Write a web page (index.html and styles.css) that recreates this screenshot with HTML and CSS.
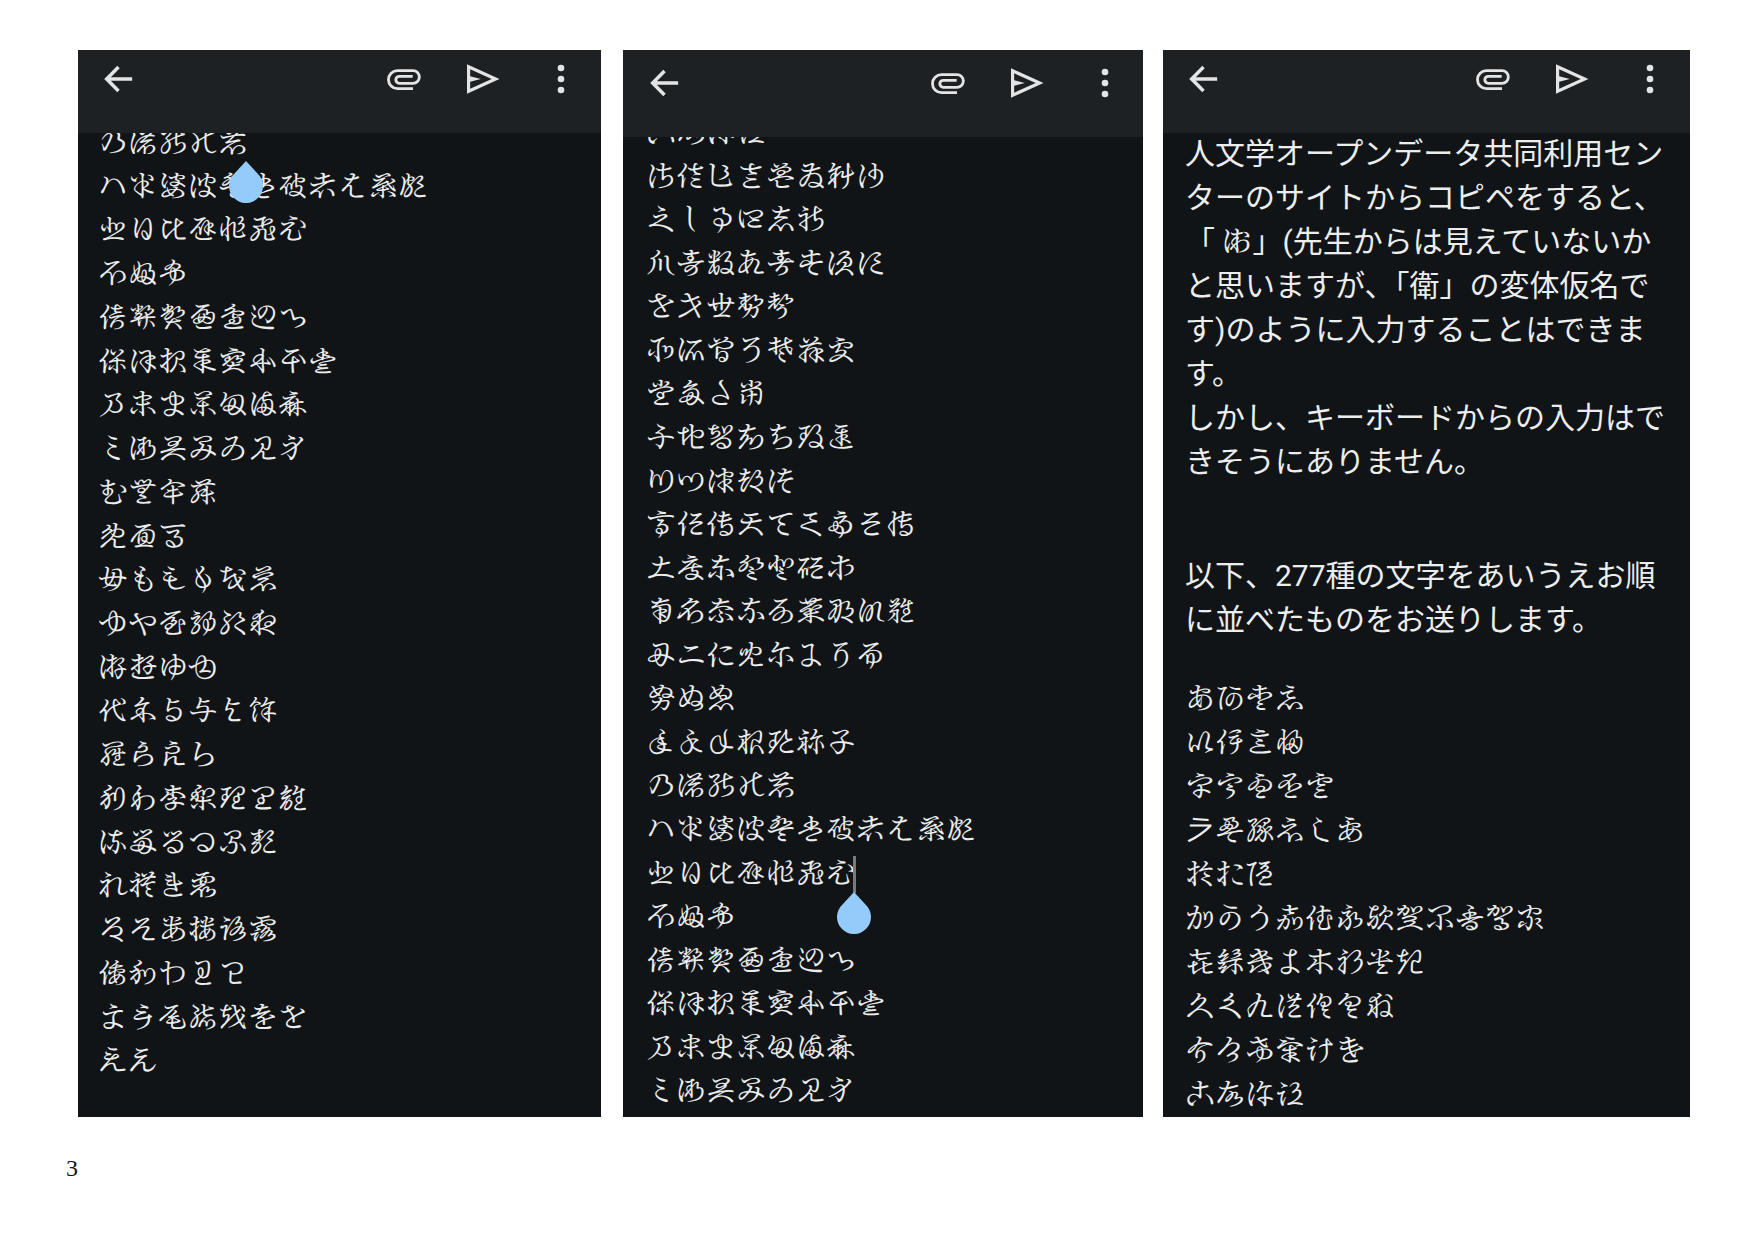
FILE: index.html
```html
<!DOCTYPE html>
<html lang="ja">
<head>
<meta charset="utf-8">
<title>変体仮名の入力</title>
<link rel="stylesheet" href="styles.css">
</head>
<body>
<svg class="sprite" aria-hidden="true">
  <symbol id="back" viewBox="0 0 24 24"><path d="M20.500 12H5.500M12.300 4.800 5.200 12l7.100 7.200" fill="none" stroke="currentColor" stroke-width="2.100"/></symbol>
  <symbol id="clip" viewBox="0 0 24 24"><path d="M18 17.800H8.700a5.400 5.400 0 0 1 0-10.800h9.300a3.800 3.800 0 0 1 0 7.600H9.800a2.100 2.100 0 0 1 0-4.200h8" fill="none" stroke="currentColor" stroke-width="1.700"/></symbol>
  <symbol id="send" viewBox="0 0 24 24"><path d="M3 3.200v17.600L22.500 12zM4.900 6.200 17.800 12 4.900 17.800v-4.100l6.400-1.700-6.400-1.700z" fill="currentColor" fill-rule="evenodd"/></symbol>
  <symbol id="more" viewBox="0 0 24 24"><g fill="currentColor"><circle cx="12" cy="5.400" r="2"/><circle cx="12" cy="12" r="2"/><circle cx="12" cy="18.600" r="2"/></g></symbol>
  <symbol id="drop" viewBox="0 0 34 42"><path d="M17 0 28.500 12.500a17 17 0 1 1-23 0z" fill="#95cbfa"/></symbol>
</svg>
<main class="panels">
  <section class="panel">
    <header class="bar">
      <button class="icon back" aria-label="戻る"><svg><use href="#back"/></svg></button>
      <button class="icon" aria-label="添付"><svg><use href="#clip"/></svg></button>
      <button class="icon" aria-label="送信"><svg><use href="#send"/></svg></button>
      <button class="icon" aria-label="その他"><svg><use href="#more"/></svg></button>
    </header>
    <div class="body">
      <ul class="kana kana-end">
        <li>&#x1B099;&#x1B09A;&#x1B09B;&#x1B09C;&#x1B09D;<span class="cursor"><svg class="drop"><use href="#drop"/></svg></span></li>
        <li>&#x1B09E;&#x1B09F;&#x1B0A0;&#x1B0A1;&#x1B0A2;&#x1B0A3;&#x1B0A4;&#x1B0A5;&#x1B0A6;&#x1B0A7;&#x1B0A8;</li>
        <li>&#x1B0A9;&#x1B0AA;&#x1B0AB;&#x1B0AC;&#x1B0AD;&#x1B0AE;&#x1B0AF;</li>
        <li>&#x1B0B0;&#x1B0B1;&#x1B0B2;</li>
        <li>&#x1B0B3;&#x1B0B4;&#x1B0B5;&#x1B0B6;&#x1B0B7;&#x1B0B8;&#x1B0B9;</li>
        <li>&#x1B0BA;&#x1B0BB;&#x1B0BC;&#x1B0BD;&#x1B0BE;&#x1B0BF;&#x1B0C0;&#x1B0C1;</li>
        <li>&#x1B0C2;&#x1B0C3;&#x1B0C4;&#x1B0C7;&#x1B0C6;&#x1B0C5;&#x1B0C8;</li>
        <li>&#x1B0C9;&#x1B0CA;&#x1B0CB;&#x1B0CC;&#x1B0CD;&#x1B0CE;&#x1B0CF;</li>
        <li>&#x1B0D0;&#x1B0D1;&#x1B0D2;&#x1B0D3;</li>
        <li>&#x1B0D4;&#x1B0D5;&#x1B0D6;</li>
        <li>&#x1B0D7;&#x1B0D8;&#x1B0D9;&#x1B0DA;&#x1B0DB;&#x1B0DC;</li>
        <li>&#x1B0DD;&#x1B0DE;&#x1B0DF;&#x1B0E0;&#x1B0E1;&#x1B0E2;</li>
        <li>&#x1B0E3;&#x1B0E6;&#x1B0E4;&#x1B0E5;</li>
        <li>&#x1B0E7;&#x1B0E8;&#x1B0EA;&#x1B0E9;&#x1B0EB;&#x1B0EC;</li>
        <li>&#x1B0ED;&#x1B0EF;&#x1B0EE;&#x1B0F0;</li>
        <li>&#x1B0F1;&#x1B0F2;&#x1B0F3;&#x1B0F4;&#x1B0F5;&#x1B0F6;&#x1B0F7;</li>
        <li>&#x1B0F8;&#x1B0F9;&#x1B0FA;&#x1B0FB;&#x1B0FC;&#x1B0FD;</li>
        <li>&#x1B0FF;&#x1B0FE;&#x1B100;&#x1B101;</li>
        <li>&#x1B102;&#x1B103;&#x1B104;&#x1B105;&#x1B106;&#x1B107;</li>
        <li>&#x1B108;&#x1B109;&#x1B10A;&#x1B10B;&#x1B10C;</li>
        <li>&#x1B116;&#x1B117;&#x1B118;&#x1B119;&#x1B11A;&#x1B11B;&#x1B11C;</li>
        <li>&#x1B11D;&#x1B11E;</li>
      </ul>
    </div>
  </section>
  <section class="panel panel-mid">
    <header class="bar">
      <button class="icon back" aria-label="戻る"><svg><use href="#back"/></svg></button>
      <button class="icon" aria-label="添付"><svg><use href="#clip"/></svg></button>
      <button class="icon" aria-label="送信"><svg><use href="#send"/></svg></button>
      <button class="icon" aria-label="その他"><svg><use href="#more"/></svg></button>
    </header>
    <div class="body">
      <ul class="kana">
        <li>&#x1B038;&#x1B039;&#x1B03A;&#x1B03B;</li>
        <li>&#x1B03E;&#x1B03D;&#x1B03C;&#x1B03F;&#x1B040;&#x1B041;&#x1B042;&#x1B043;</li>
        <li>&#x1B044;&#x1B045;&#x1B046;&#x1B047;&#x1B048;&#x1B049;</li>
        <li>&#x1B04A;&#x1B04B;&#x1B04C;&#x1B04D;&#x1B04E;&#x1B04F;&#x1B050;&#x1B051;</li>
        <li>&#x1B052;&#x1B053;&#x1B054;&#x1B055;&#x1B056;</li>
        <li>&#x1B057;&#x1B058;&#x1B059;&#x1B05A;&#x1B05B;&#x1B05C;&#x1B05D;</li>
        <li>&#x1B05E;&#x1B05F;&#x1B060;&#x1B061;</li>
        <li>&#x1B062;&#x1B063;&#x1B064;&#x1B065;&#x1B066;&#x1B067;&#x1B068;</li>
        <li>&#x1B069;&#x1B06A;&#x1B06B;&#x1B06C;&#x1B06D;</li>
        <li>&#x1B06E;&#x1B06F;&#x1B070;&#x1B071;&#x1B072;&#x1B073;&#x1B074;&#x1B075;&#x1B076;</li>
        <li>&#x1B077;&#x1B078;&#x1B079;&#x1B07A;&#x1B07B;&#x1B07C;&#x1B07D;</li>
        <li>&#x1B07E;&#x1B07F;&#x1B080;&#x1B081;&#x1B082;&#x1B083;&#x1B084;&#x1B085;&#x1B086;</li>
        <li>&#x1B087;&#x1B088;&#x1B089;&#x1B08A;&#x1B08B;&#x1B08C;&#x1B08D;&#x1B08E;</li>
        <li>&#x1B08F;&#x1B090;&#x1B091;</li>
        <li>&#x1B092;&#x1B093;&#x1B094;&#x1B095;&#x1B096;&#x1B097;&#x1B098;</li>
        <li>&#x1B099;&#x1B09A;&#x1B09B;&#x1B09C;&#x1B09D;</li>
        <li>&#x1B09E;&#x1B09F;&#x1B0A0;&#x1B0A1;&#x1B0A2;&#x1B0A3;&#x1B0A4;&#x1B0A5;&#x1B0A6;&#x1B0A7;&#x1B0A8;</li>
        <li>&#x1B0A9;&#x1B0AA;&#x1B0AB;&#x1B0AC;&#x1B0AD;&#x1B0AE;&#x1B0AF;<span class="cursor caret"><svg class="drop"><use href="#drop"/></svg></span></li>
        <li>&#x1B0B0;&#x1B0B1;&#x1B0B2;</li>
        <li>&#x1B0B3;&#x1B0B4;&#x1B0B5;&#x1B0B6;&#x1B0B7;&#x1B0B8;&#x1B0B9;</li>
        <li>&#x1B0BA;&#x1B0BB;&#x1B0BC;&#x1B0BD;&#x1B0BE;&#x1B0BF;&#x1B0C0;&#x1B0C1;</li>
        <li>&#x1B0C2;&#x1B0C3;&#x1B0C4;&#x1B0C7;&#x1B0C6;&#x1B0C5;&#x1B0C8;</li>
        <li>&#x1B0C9;&#x1B0CA;&#x1B0CB;&#x1B0CC;&#x1B0CD;&#x1B0CE;&#x1B0CF;</li>
      </ul>
    </div>
  </section>
  <section class="panel">
    <header class="bar">
      <button class="icon back" aria-label="戻る"><svg><use href="#back"/></svg></button>
      <button class="icon" aria-label="添付"><svg><use href="#clip"/></svg></button>
      <button class="icon" aria-label="送信"><svg><use href="#send"/></svg></button>
      <button class="icon" aria-label="その他"><svg><use href="#more"/></svg></button>
    </header>
    <div class="body message">
      <p>人文学オープンデータ共同利用セン<br>ターのサイトからコピペをすると、<br>「 &#x1B113;」(先生からは見えていないか<br>と思いますが、「衛」の変体仮名で<br>す)のように入力することはできま<br>す。<br>しかし、キーボードからの入力はで<br>きそうにありません。</p>
      <p>以下、277種の文字をあいうえお順<br>に並べたものをお送りします。</p>
      <ul class="kana">
        <li>&#x1B002;&#x1B004;&#x1B003;&#x1B005;</li>
        <li>&#x1B006;&#x1B007;&#x1B008;&#x1B009;</li>
        <li>&#x1B00A;&#x1B00B;&#x1B00C;&#x1B00D;&#x1B00E;</li>
        <li>&#x1B000;&#x1B00F;&#x1B010;&#x1B011;&#x1B012;&#x1B013;</li>
        <li>&#x1B014;&#x1B015;&#x1B016;</li>
        <li>&#x1B018;&#x1B019;&#x1B01A;&#x1B01B;&#x1B017;&#x1B01C;&#x1B01D;&#x1B01E;&#x1B01F;&#x1B020;&#x1B021;&#x1B022;</li>
        <li>&#x1B023;&#x1B024;&#x1B025;&#x1B026;&#x1B027;&#x1B028;&#x1B029;&#x1B02A;</li>
        <li>&#x1B02B;&#x1B02C;&#x1B02D;&#x1B02E;&#x1B02F;&#x1B030;&#x1B031;</li>
        <li>&#x1B032;&#x1B033;&#x1B034;&#x1B035;&#x1B036;&#x1B037;</li>
        <li>&#x1B038;&#x1B039;&#x1B03A;&#x1B03B;</li>
      </ul>
    </div>
  </section>
</main>
<footer class="page-number">3</footer>
</body>
</html>
```
FILE: styles.css
```css
* { box-sizing: border-box; }

body {
  margin: 0;
  background: #fff;
  font-family: Roboto, "Noto Sans CJK JP", sans-serif;
}

.sprite { display: none; }

.panels {
  display: grid;
  grid-template-columns: 523fr 522fr 527fr;
  gap: 20px;
  padding: 50px 64px 0 78px;
}

.panel {
  display: flex;
  flex-direction: column;
  overflow: hidden;
  background: #111416;
  color: #eceded;
}

.panel-mid { margin-left: 2px; }

.bar {
  position: relative;
  z-index: 1;
  display: flex;
  align-items: flex-start;
  gap: 39px;
  height: 83px;
  padding: 9px 20px;
  background: #1e2124;
}

.panel-mid .bar {
  height: 87px;
  padding: 13px 18px 13px 21px;
}

.icon {
  display: block;
  width: 40px;
  height: 40px;
  padding: 0;
  border: 0;
  background: none;
  color: #e3e4e5;
}

.icon svg {
  display: block;
  width: 40px;
  height: 40px;
}

.back { margin-right: auto; }

.body {
  display: flex;
  flex: 1;
  flex-direction: column;
  margin-top: -12px;
  padding: 0 20px;
  font-size: 30px;
  line-height: 43px;
  white-space: nowrap;
}

.panel-mid .body {
  margin-top: -26px;
  padding: 0 23px 4px;
}

.kana {
  display: grid;
  flex: 1;
  grid-auto-rows: 1fr;
  margin: 0;
  padding: 0;
  list-style: none;
}

.kana-end { margin-bottom: 34px; }

.body.message {
  margin-top: -1px;
  padding: 0 22px;
  line-height: 44px;
}

.message p { margin: 0 0 70px; }
.message p + p { margin-bottom: 35px; }

.cursor { position: relative; }

.drop {
  position: absolute;
  top: 36px;
  left: -19px;
  width: 34px;
  height: 42px;
}

.caret::before {
  position: absolute;
  top: 0;
  left: -3px;
  width: 3px;
  height: 37px;
  background: #77797a;
  content: "";
}

.page-number {
  padding: 35px 66px;
  color: #111;
  font: 24px/32px "Liberation Serif", serif;
}
```
